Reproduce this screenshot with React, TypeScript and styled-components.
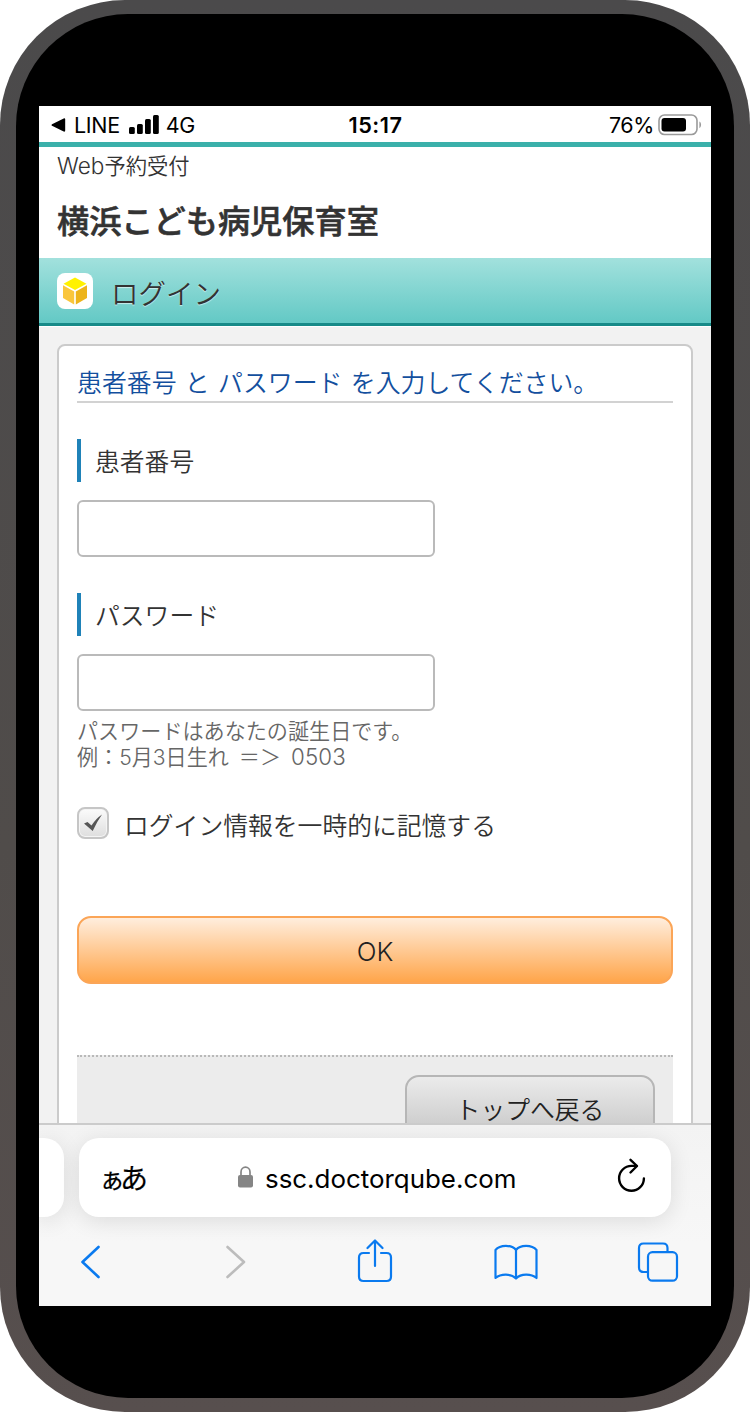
import React from "react";
import styled, { createGlobalStyle } from "styled-components";

const GlobalStyle = createGlobalStyle`
  * { box-sizing: border-box; }
  body { margin: 0; background: #fff; font-family: Inter, "Noto Sans CJK JP", sans-serif; color: #333; }
  button { font-family: inherit; }
  svg { display: block; flex: none; }
`;

const Phone = styled.div`
  width: 750px;
  height: 1412px;
  padding: 14px 16px 14px;
  border-radius: 125px;
  background: linear-gradient(#4b4a4b, #504c4a 60%, #574f4e);
`;

const Bezel = styled.div`
  height: 1384px;
  padding: 92px 23px 92px;
  border-radius: 112px;
  background: #000;
`;

const Screen = styled.main`
  width: 672px;
  height: 1200px;
  display: flex;
  flex-direction: column;
  overflow: hidden;
  background: #f2f2f2;
`;

const StatusBar = styled.div`
  height: 36px;
  flex: none;
  display: grid;
  grid-template-columns: 1fr auto 1fr;
  align-items: center;
  padding: 1px 9px 0 12px;
  background: #fff;
  color: #000;
  font-size: 21.5px;
  line-height: 30px;
`;

const StatusGroup = styled.div<{ $end?: boolean }>`
  display: flex;
  align-items: center;
  justify-content: ${(p) => (p.$end ? "flex-end" : "flex-start")};
`;

const StatusText = styled.span<{ $left?: number; $spacing?: number }>`
  margin-left: ${(p) => p.$left ?? 0}px;
  letter-spacing: ${(p) => p.$spacing ?? 0}px;
`;

const Clock = styled.span`
  padding-right: 2px;
  font-weight: 600;
  font-size: 21.7px;
  letter-spacing: 0.5px;
`;

const Header = styled.header`
  height: 116px;
  flex: none;
  border-top: 5px solid #3bb0aa;
  padding: 3px 18px 0;
  background: #fff;
`;

const Service = styled.div`
  font-size: 21.3px;
  line-height: 32px;
  font-weight: 350;
  span { font-size: 22.6px; }
`;

const Facility = styled.h1`
  margin: 19px 0 0;
  font-size: 32.2px;
  line-height: 42px;
  font-weight: 500;
  -webkit-text-stroke: 0.6px #333;
`;

const TitleBar = styled.div`
  height: 68px;
  flex: none;
  display: flex;
  align-items: center;
  gap: 18px;
  padding: 0 18px;
  border-bottom: 3px solid #178a88;
  background: linear-gradient(#a2e1dd, #63c9c5);
`;

const LogoTile = styled.span`
  width: 36px;
  height: 36px;
  display: grid;
  place-items: center;
  border-radius: 8px;
  background: #fff;
`;

const PageTitle = styled.h2`
  margin: 7px 0 0;
  font-size: 27.5px;
  line-height: 40px;
  font-weight: 350;
  text-shadow: 0 1px 1px rgba(255, 255, 255, 0.6);
`;

const Content = styled.div`
  flex: 1;
  min-height: 0;
  overflow: hidden;
  padding: 17px 18px 0;
  border-top: 1px solid #fff;
`;

const Card = styled.form`
  height: 900px;
  padding: 18px 18px 0;
  border: 2px solid #cbcbcb;
  border-radius: 8px;
  background: #fff;
`;

const Lead = styled.p`
  margin: 0;
  height: 39px;
  border-bottom: 2px solid #d2d2d2;
  color: #134f9e;
  font-size: 24.9px;
  line-height: 39px;
  font-weight: 350;
  word-spacing: 1.3px;
  white-space: pre;
`;

const Field = styled.div<{ $top: number }>`
  margin-top: ${(p) => p.$top}px;
`;

const Label = styled.label`
  display: block;
  height: 43px;
  padding-left: 14px;
  border-left: 4px solid #1f82b8;
  font-size: 24.8px;
  line-height: 47px;
  font-weight: 350;
`;

const Input = styled.input`
  display: block;
  width: 358px;
  height: 57px;
  margin: 18px 0 0;
  border: 2px solid #bababa;
  border-radius: 6px;
  background: #fff;
  outline: none;
`;

const Hint = styled.p`
  margin: 8px 0 0;
  color: #666;
  font-size: 21.1px;
  line-height: 26px;
  font-weight: 350;
  word-spacing: 4px;
  span { font-size: 22.3px; line-height: 20px; letter-spacing: 0.2px; }
`;

const Remember = styled.div`
  display: flex;
  align-items: center;
  gap: 15px;
  height: 40px;
  margin-top: 32px;
  font-size: 24.8px;
  font-weight: 350;
`;

const CheckTile = styled.span`
  width: 32px;
  height: 32px;
  display: grid;
  place-items: center;
  border: 2px solid #c6c6c6;
  border-radius: 8px;
  background: linear-gradient(#fbfbfb, #dedede);
  box-shadow: inset 0 0 0 1px #f4f4f4;
`;

const RememberText = styled.span`
  line-height: 36px;
  padding-top: 6px;
`;

const OkButton = styled.button`
  display: block;
  width: 100%;
  height: 68px;
  margin-top: 73px;
  padding: 3px 0 0;
  border: 2px solid #fba557;
  border-radius: 14px;
  background: linear-gradient(#fff0e2, #ffa346) border-box;
  color: #222;
  font-size: 26px;
  font-weight: 300;
`;

const CardFooter = styled.div`
  height: 160px;
  display: flex;
  justify-content: flex-end;
  align-items: flex-start;
  margin-top: 71px;
  padding: 18px 18px 0;
  border-top: 2px dotted #b9b9b9;
  background: #ececec;
`;

const BackButton = styled.button`
  width: 250px;
  height: 68px;
  padding: 2px 0 0;
  border: 2px solid #b6b6b6;
  border-radius: 14px;
  background: linear-gradient(#ebebeb, #c4c4c4);
  color: #222;
  font-size: 24.8px;
  line-height: 36px;
  font-weight: 350;
`;

const Chrome = styled.div`
  height: 183px;
  flex: none;
  border-top: 2px solid #cbcbcb;
  background: #f7f7f7;
`;

const AddressRow = styled.div`
  height: 118px;
  display: flex;
  gap: 15px;
  padding-top: 13px;
  overflow: hidden;
  background: linear-gradient(#f3f3f3, #f7f7f7);
`;

const TabStub = styled.div`
  width: 25px;
  height: 79px;
  flex: none;
  border-radius: 0 20px 20px 0;
  background: #fff;
  box-shadow: 0 4px 22px rgba(0, 0, 0, 0.11);
`;

const AddressBar = styled.div`
  width: 592px;
  height: 79px;
  flex: none;
  display: flex;
  align-items: center;
  padding: 0 24px 0 20px;
  border-radius: 20px;
  background: #fff;
  box-shadow: 0 4px 22px rgba(0, 0, 0, 0.11);
  color: #000;
`;

const TextSize = styled.span`
  width: 48px;
  flex: none;
  display: flex;
  align-items: baseline;
  padding-top: 3px;
  font-weight: 400;
  font-size: 28px;
  line-height: 36px;
  letter-spacing: -5px;
  -webkit-text-stroke: 0.2px #000;
  small { font-size: 26px; }
`;

const Domain = styled.span`
  flex: 1;
  display: flex;
  align-items: center;
  margin-left: 91px;
  gap: 12px;
  padding-top: 2px;
  font-size: 25.9px;
  line-height: 36px;
  svg { margin-top: -3px; }
`;

const Toolbar = styled.nav`
  height: 50px;
  margin-top: -6px;
  display: flex;
  align-items: center;
  justify-content: space-between;
  padding: 0 31px 0 30px;
  color: #0a7aef;
`;

const ToolSlot = styled.span<{ $shift?: number; $lift?: number }>`
  width: 44px;
  flex: none;
  display: flex;
  justify-content: center;
  padding-left: ${(p) => p.$shift ?? 0}px;
  padding-bottom: ${(p) => p.$lift ?? 0}px;
`;

const Cube = () => (
  <svg width="26" height="28" viewBox="0 0 26 28">
    <path d="M13 .5 24.5 6.800 13 13 1.5 6.800Z" fill="#fff200" />
    <path d="M1 8.300 12.2 14.500V27.5L1 21Z" fill="#fac63c" />
    <path d="M25 8.300 13.8 14.500V27.5L25 21Z" fill="#edb41a" />
  </svg>
);

const Signal = () => (
  <svg width="30" height="20" viewBox="0 0 30 20">
    <rect x="0" y="12" width="5.8" height="7" rx="1.5" />
    <rect x="8" y="9" width="5.8" height="10" rx="1.5" />
    <rect x="16" y="4" width="5.8" height="15" rx="1.5" />
    <rect x="24" y="0" width="5.8" height="19" rx="1.5" />
  </svg>
);

const Battery = () => (
  <svg width="44" height="22" viewBox="0 0 44 22" fill="none">
    <rect x="1" y="1" width="38" height="19.5" rx="5.5" stroke="#9a9a9a" strokeWidth="1.6" />
    <rect x="3.5" y="4" width="24.5" height="13.500" rx="3" fill="#000" />
    <path d="M41.4 7.6c2.2.8 2.2 5.8 0 6.6Z" fill="#9a9a9a" />
  </svg>
);

export default function App() {
  return (
    <>
      <GlobalStyle />
      <Phone>
        <Bezel>
          <Screen>
            <StatusBar>
              <StatusGroup>
                <svg width="15" height="14" viewBox="0 0 15 14">
                  <path d="M1 6.200 12.700.4q1.500-.5 1.500 1v11.200q0 1.500-1.500 1L1 7.800Q0 7 1 6.200Z" />
                </svg>
                <StatusText $left={8} $spacing={-0.3}>LINE</StatusText>
                <StatusText $left={9}><Signal /></StatusText>
                <StatusText $left={7} $spacing={-0.5}>4G</StatusText>
              </StatusGroup>
              <Clock>15:17</Clock>
              <StatusGroup $end>
                <StatusText $spacing={-0.4}>76%</StatusText>
                <StatusText $left={4}><Battery /></StatusText>
              </StatusGroup>
            </StatusBar>
            <Header>
              <Service><span>Web</span>予約受付</Service>
              <Facility>横浜こども病児保育室</Facility>
            </Header>
            <TitleBar>
              <LogoTile><Cube /></LogoTile>
              <PageTitle>ログイン</PageTitle>
            </TitleBar>
            <Content>
              <Card onSubmit={(e) => e.preventDefault()}>
                <Lead>患者番号 と パスワード を入力してください。</Lead>
                <Field $top={36}>
                  <Label htmlFor="patient">患者番号</Label>
                  <Input id="patient" />
                </Field>
                <Field $top={36}>
                  <Label htmlFor="password">パスワード</Label>
                  <Input id="password" type="password" />
                </Field>
                <Hint>
                  パスワードはあなたの誕生日です。<br />
                  例：5月3日生れ ＝＞ <span>0503</span>
                </Hint>
                <Remember>
                  <CheckTile>
                    <svg width="20" height="18" viewBox="0 0 20 18">
                      <path d="M1 9.500 4.500 8 8.500 11.500Q13 4.500 19 .5 14 7.500 9.700 17Z" fill="#555" />
                    </svg>
                  </CheckTile>
                  <RememberText>ログイン情報を一時的に記憶する</RememberText>
                </Remember>
                <OkButton type="submit">OK</OkButton>
                <CardFooter>
                  <BackButton type="button">トップへ戻る</BackButton>
                </CardFooter>
              </Card>
            </Content>
            <Chrome>
              <AddressRow>
                <TabStub />
                <AddressBar>
                  <TextSize><small>ぁ</small>あ</TextSize>
                  <Domain>
                    <svg width="15" height="22" viewBox="0 0 15 22" fill="none">
                      <rect x="0" y="9" width="15" height="12.500" rx="2" fill="#858585" />
                      <path d="M3 10V6a4.500 4.800 0 0 1 9 0V10" stroke="#858585" strokeWidth="1.700" />
                    </svg>
                    ssc.doctorqube.com
                  </Domain>
                  <svg width="32" height="40" viewBox="0 0 32 40" fill="none" stroke="#000" strokeWidth="2.400" strokeLinecap="round" strokeLinejoin="round">
                    <path d="M21.500 7.900H16.500a12.400 12.400 0 1 0 12.400 12.500" />
                    <path d="M15.500 1.800 22 8 15.500 14.500" />
                  </svg>
                </AddressBar>
              </AddressRow>
              <Toolbar>
                <ToolSlot>
                  <svg width="22" height="36" viewBox="0 0 22 36" fill="none" stroke="currentColor" strokeWidth="2.600" strokeLinecap="round" strokeLinejoin="round">
                    <path d="M18.500 3 2.500 18 18.500 33" />
                  </svg>
                </ToolSlot>
                <ToolSlot $shift={7}>
                  <svg width="22" height="36" viewBox="0 0 22 36" fill="none" stroke="#bcbcbc" strokeWidth="2.600" strokeLinecap="round" strokeLinejoin="round">
                    <path d="M2.500 3 19 18 2.500 33" />
                  </svg>
                </ToolSlot>
                <ToolSlot $lift={2}>
                  <svg width="36" height="44" viewBox="0 0 36 44" fill="none" stroke="currentColor" strokeWidth="2.200" strokeLinecap="round" strokeLinejoin="round">
                    <path d="M12 14H6.500Q2 14 2 18.500V37.500Q2 42 6.500 42H29.500Q34 42 34 37.500V18.500Q34 14 29.500 14H24M18 27V2M10.500 9 18 1.500 25.500 9" />
                  </svg>
                </ToolSlot>
                <ToolSlot>
                  <svg width="44" height="36" viewBox="0 0 44 36" fill="none" stroke="currentColor" strokeWidth="2.200" strokeLinecap="round" strokeLinejoin="round">
                    <path d="M22 6C18 .5 6 .5 1.500 6V34C7 29.500 17 29.500 22 34.500 27 29.500 37 29.500 42.500 34V6C38 .5 26 .5 22 6ZM22 6V34" />
                  </svg>
                </ToolSlot>
                <ToolSlot>
                  <svg width="42" height="40" viewBox="0 0 42 40" fill="none" stroke="currentColor" strokeWidth="2.200">
                    <path d="M11 30H6.500Q2 30 2 25.500V6Q2 1.500 6.500 1.500H26Q30.500 1.500 30.500 6V10" />
                    <rect x="11" y="10.200" width="29" height="28.500" rx="4.500" />
                  </svg>
                </ToolSlot>
              </Toolbar>
            </Chrome>
          </Screen>
        </Bezel>
      </Phone>
    </>
  );
}
